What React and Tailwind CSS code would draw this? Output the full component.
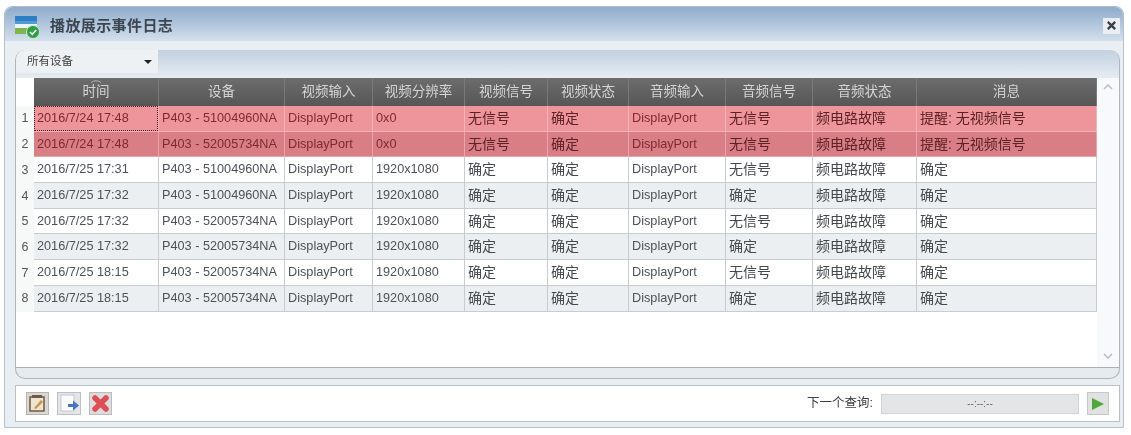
import React from "react";

const font = "[font-family:'Liberation_Sans','Noto_Sans_CJK_SC',sans-serif]";

const columns = [
  { name: "时间", width: "w-[125px]" },
  { name: "设备", width: "w-[126px]" },
  { name: "视频输入", width: "w-[88px]" },
  { name: "视频分辨率", width: "w-[92px]" },
  { name: "视频信号", width: "w-[83px]" },
  { name: "视频状态", width: "w-[81px]" },
  { name: "音频输入", width: "w-[97px]" },
  { name: "音频信号", width: "w-[87px]" },
  { name: "音频状态", width: "w-[104px]" },
  { name: "消息", width: "flex-1" },
];

const rows = [
  { alert: true, cells: ["2016/7/24 17:48", "P403 - 51004960NA", "DisplayPort", "0x0", "无信号", "确定", "DisplayPort", "无信号", "频电路故障", "提醒: 无视频信号"] },
  { alert: true, cells: ["2016/7/24 17:48", "P403 - 52005734NA", "DisplayPort", "0x0", "无信号", "确定", "DisplayPort", "无信号", "频电路故障", "提醒: 无视频信号"] },
  { cells: ["2016/7/25 17:31", "P403 - 51004960NA", "DisplayPort", "1920x1080", "确定", "确定", "DisplayPort", "无信号", "频电路故障", "确定"] },
  { cells: ["2016/7/25 17:32", "P403 - 51004960NA", "DisplayPort", "1920x1080", "确定", "确定", "DisplayPort", "确定", "频电路故障", "确定"] },
  { cells: ["2016/7/25 17:32", "P403 - 52005734NA", "DisplayPort", "1920x1080", "确定", "确定", "DisplayPort", "无信号", "频电路故障", "确定"] },
  { cells: ["2016/7/25 17:32", "P403 - 52005734NA", "DisplayPort", "1920x1080", "确定", "确定", "DisplayPort", "确定", "频电路故障", "确定"] },
  { cells: ["2016/7/25 18:15", "P403 - 52005734NA", "DisplayPort", "1920x1080", "确定", "确定", "DisplayPort", "无信号", "频电路故障", "确定"] },
  { cells: ["2016/7/25 18:15", "P403 - 52005734NA", "DisplayPort", "1920x1080", "确定", "确定", "DisplayPort", "确定", "频电路故障", "确定"] },
];

const rowColor = (row, i) => {
  if (row.alert) {
    return i === 0
      ? "bg-[#ee959b] border-[#f2b4b8]"
      : "bg-[#d97e85] border-[#e8a6aa]";
  }
  return i % 2 === 0
    ? "bg-white border-[#c6ccd1]"
    : "bg-[#ebeff2] border-[#c6ccd1]";
};

const cellText = (row, cell) => {
  const isCjk = /[\u4e00-\u9fff]/.test(cell);
  if (row.alert) {
    return isCjk
      ? "text-[14px] text-[#5c2226]"
      : "text-[12.700px] text-[#7e2a30]";
  }
  return isCjk
    ? "text-[14px] text-[#45494e]"
    : "text-[12.700px] text-[#4c5258]";
};

const LogIcon = () => (
  <svg width="25" height="24" viewBox="0 0 25 24">
    <rect x="0" y="1" width="22" height="18" fill="#4f9bd8" />
    <rect x="0" y="1" width="22" height="5" fill="#2f7fc6" />
    <rect x="0" y="9" width="22" height="4" fill="#eef3f6" />
    <rect x="0" y="13" width="22" height="6" fill="#7fb54f" />
    <circle cx="18" cy="17" r="6.500" fill="#2f9e46" stroke="#cfe9d5" strokeWidth="1" />
    <path d="M15 17l2.200 2.400 4-4.400" fill="none" stroke="#fff" strokeWidth="1.600" />
  </svg>
);

const EditIcon = () => (
  <svg width="23" height="23" viewBox="0 0 23 23">
    <rect x="0.500" y="0.500" width="22" height="22" fill="#d9d8d2" stroke="#b5b5b0" />
    <rect x="4" y="5" width="14" height="14" fill="#efe4cf" stroke="#6d5a48" strokeWidth="1.500" />
    <rect x="6" y="3" width="10" height="3" fill="#6d5a48" />
    <path d="M8 16l7-8 2 2-7 7z" fill="#c9964f" />
  </svg>
);

const ExportIcon = () => (
  <svg width="24" height="23" viewBox="0 0 24 23">
    <rect x="0.500" y="0.500" width="23" height="22" fill="#e3e5e8" stroke="#bcbfc4" />
    <rect x="4" y="3" width="13" height="16" fill="#fbfbfc" stroke="#c3c8d0" />
    <path d="M11 12h5V8.500l6 5-6 5V15h-5z" fill="#4a72c4" />
  </svg>
);

const DeleteIcon = () => (
  <svg width="23" height="23" viewBox="0 0 23 23">
    <rect x="0.500" y="0.500" width="22" height="22" fill="#dddcdc" stroke="#bdbcbc" />
    <path d="M6 6l11 11M17 6L6 17" stroke="#dd4f55" strokeWidth="5.500" strokeLinecap="round" />
  </svg>
);

export default function App() {
  return (
    <div className={`${font} w-[1131px] h-[435px] bg-white pt-[6px] pl-[4px] pr-[7px] pb-[7px] overflow-hidden`}>
      <div className="h-full rounded-t-[8px] border border-[#b4c0cc] bg-[#e9eef3] flex flex-col blur-[0.4px]">
        {/* title bar */}
        <div className="h-[34px] shrink-0 rounded-t-[8px] bg-gradient-to-b from-[#8fabcc] to-[#d3e0ec] flex items-center pl-[10px] pr-[3px]">
          <div className="mt-[5px] flex"><LogIcon /></div>
          <span className="ml-[10px] mt-[5px] text-[15px] font-bold tracking-[0.4px] text-[#3c4650]">播放展示事件日志</span>
          <button className="ml-auto mt-[3px] w-[17px] h-[16px] bg-[#e9eef3] flex items-center justify-center text-[#3a3f46]">
            <svg width="11" height="11" viewBox="0 0 12 12">
              <path d="M2 2l8 8M10 2l-8 8" stroke="currentColor" strokeWidth="2.500" />
            </svg>
          </button>
        </div>

        {/* log panel */}
        <div className="mt-[9px] ml-[10px] mr-[3px] h-[329px] shrink-0 rounded-[10px] border-b border-r border-l border-[#aeb6bd] bg-[#e6ebf0] flex flex-col overflow-hidden">
          <div className="h-[28px] shrink-0 bg-gradient-to-b from-[#c2d0e0] to-[#e6ecf2] flex">
            <div className="w-[142px] h-[23px] bg-[#eef1f3] flex items-center justify-between pl-[11px] pr-[6px] text-[11.500px] text-[#444]">
              <span>所有设备</span>
              <span className="w-0 h-0 border-x-[4px] border-x-transparent border-t-[4px] border-t-[#222]" />
            </div>
          </div>

          <div className="flex h-[290px] shrink-0 bg-white border-b border-[#a9b0b6]">
            <div className="flex-1 min-w-0 flex flex-col">
              <div className="flex h-[28px] shrink-0">
                <div className="w-[18px] bg-white" />
                {columns.map((col, c) => (
                  <div
                    key={col.name}
                    className={`${col.width} relative bg-gradient-to-b from-[#6d6d6d] to-[#565656] border-r border-[#7a7a7a] flex items-center justify-center text-[13.500px] text-[#d4d4d4]`}
                  >
                    {c === 0 && (
                      <svg className="absolute top-[1px] left-1/2 -translate-x-1/2" width="12" height="4" viewBox="0 0 12 4">
                        <path d="M1 3.500Q6 0 11 3.500" fill="none" stroke="#b0b0b0" strokeWidth="1" />
                      </svg>
                    )}
                    {col.name}
                  </div>
                ))}
              </div>
              {rows.map((row, i) => (
                <div key={i} className="flex h-[25.700px] shrink-0">
                  <div className="w-[18px] bg-[#f7f8f8] flex items-center justify-center text-[12.500px] text-[#555]">{i + 1}</div>
                  {row.cells.map((cell, j) => (
                    <div
                      key={j}
                      className={`${columns[j].width} ${rowColor(row, i)} ${cellText(row, cell)} relative border-r border-b flex items-center pl-[3px] whitespace-nowrap overflow-hidden`}
                    >
                      {i === 0 && j === 0 && (
                        <span className="absolute inset-0 border border-dotted border-[#4a2024]" />
                      )}
                      {cell}
                    </div>
                  ))}
                </div>
              ))}
            </div>
            <div className="w-[22px] shrink-0 bg-[#f8f9fa] flex flex-col items-center justify-between pt-[6px] pb-[8px] text-[#b9bfc5]">
              <svg width="10" height="6" viewBox="0 0 10 6"><path d="M1 5l4-4 4 4" fill="none" stroke="currentColor" strokeWidth="1.500" /></svg>
              <svg width="10" height="6" viewBox="0 0 10 6"><path d="M1 1l4 4 4-4" fill="none" stroke="currentColor" strokeWidth="1.500" /></svg>
            </div>
          </div>
        </div>

        {/* footer */}
        <div className="mt-[6px] ml-[10px] mr-[3px] h-[37px] shrink-0 border border-[#b9c0c6] bg-white flex items-center pl-[10px] pr-[10px]">
          <div className="flex gap-[8px]">
            <EditIcon />
            <ExportIcon />
            <DeleteIcon />
          </div>
          <span className="ml-auto text-[12.500px] text-[#3c3c3c]">下一个查询:</span>
          <div className="ml-[8px] w-[198px] h-[20px] bg-[#e3e5e6] border border-[#d2d5d7] flex items-center justify-center text-[10px] text-[#666]">
            --:--:--
          </div>
          <button className="ml-[8px] w-[22px] h-[23px] bg-[#dfe2e0] border border-[#c5c9c6] flex items-center justify-center">
            <svg width="14" height="14" viewBox="0 0 14 14"><path d="M1 1l12 6-12 6z" fill="#4fa63a" /></svg>
          </button>
        </div>
      </div>
    </div>
  );
}
